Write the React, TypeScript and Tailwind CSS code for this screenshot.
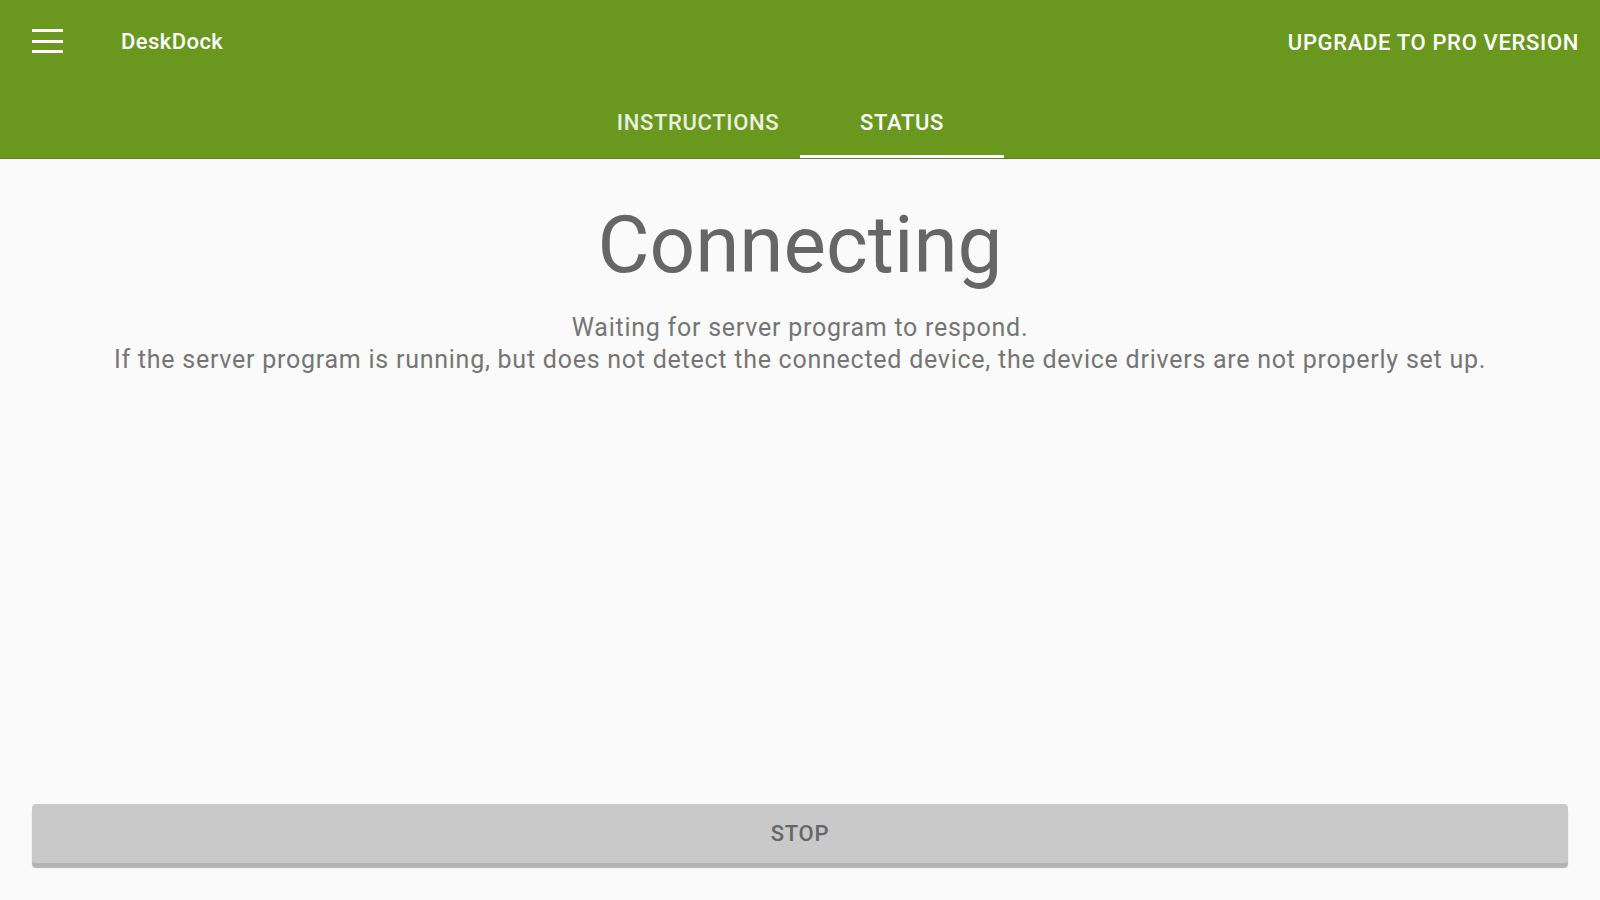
import React from 'react';

const App: React.FC = () => {
  const tabs = ['INSTRUCTIONS', 'STATUS'];
  const active = 'STATUS';

  return (
    <div className="flex min-h-screen flex-col bg-[#fafafa] font-['Roboto',sans-serif]">
      <header className="bg-[#6a981f] shadow-[0_1px_0_#5a8418]">
        <div className="flex h-[82px] items-center pl-8 pr-[21px]">
          <button className="flex h-6 w-[31px] flex-col justify-between">
            <span className="h-[3px] w-full bg-white" />
            <span className="h-[3px] w-full bg-white" />
            <span className="h-[3px] w-full bg-white" />
          </button>
          <h1 className="ml-[58px] text-[22px] font-medium tracking-[0.02em] text-white">DeskDock</h1>
          <button className="ml-auto pt-[2px] text-[22px] font-medium tracking-[0.03em] text-white">
            UPGRADE TO PRO VERSION
          </button>
        </div>
        <nav className="flex h-[76px] justify-center">
          {tabs.map((tab) => (
            <div
              key={tab}
              className={
                tab === active
                  ? 'flex w-[204px] items-center justify-center border-b-[3px] border-white pt-[7px] text-[22px] font-medium tracking-[0.03em] text-white'
                  : 'flex w-[204px] items-center justify-center border-b-[3px] border-transparent pt-[7px] text-[22px] font-medium tracking-[0.03em] text-white/85'
              }
            >
              {tab}
            </div>
          ))}
        </nav>
      </header>

      <main className="flex flex-1 flex-col items-center pt-[47px] text-center">
        <h2 className="text-[80px] leading-[80px] text-[#666666]">Connecting</h2>
        <p className="mt-[27px] text-[25px] leading-[32px] tracking-[0.03em] text-[#757575]">
          Waiting for server program to respond.
          <br />
          If the server program is running, but does not detect the connected device, the device drivers are not properly set up.
        </p>
      </main>

      <div className="px-8 pb-[37px]">
        <button className="flex h-[59px] w-full items-center justify-center rounded-[4px] bg-[#c9c9c9] text-[22px] font-medium tracking-[0.03em] text-[#666666] shadow-[0_5px_1px_rgba(0,0,0,0.28)]">
          STOP
        </button>
      </div>
    </div>
  );
};

export default App;
